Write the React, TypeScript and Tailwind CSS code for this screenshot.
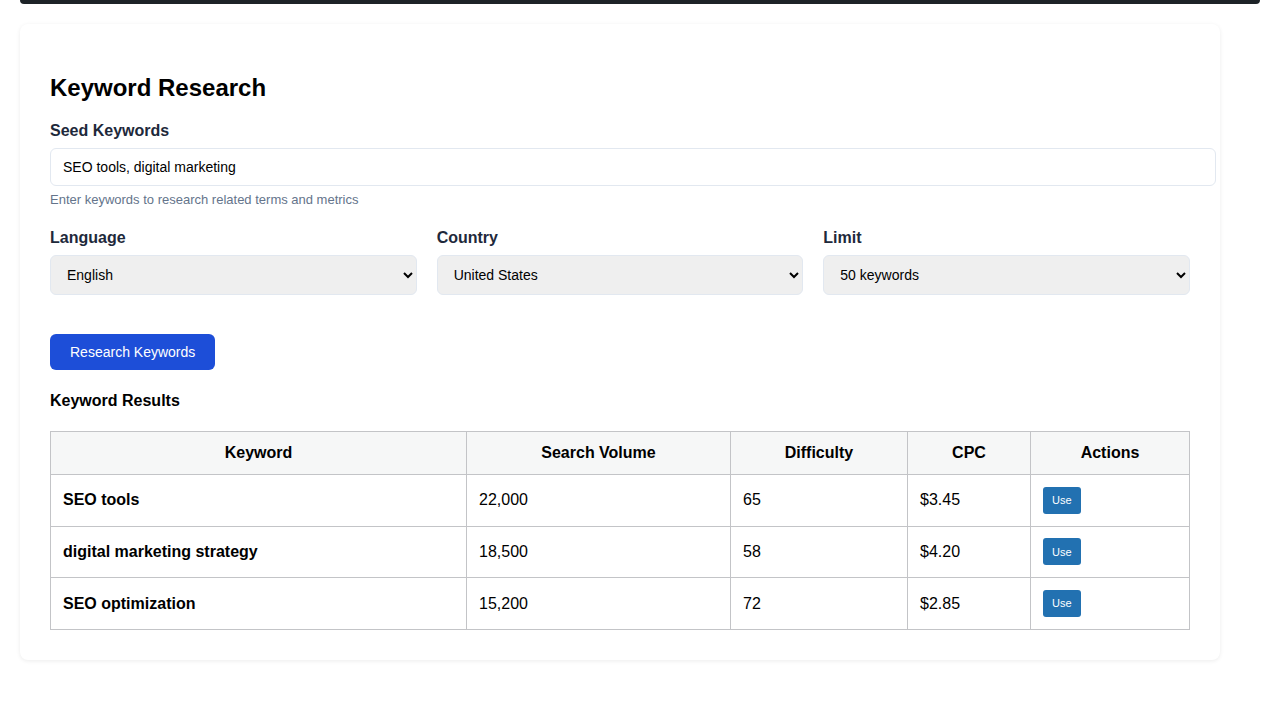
const rows = [
  { keyword: "SEO tools", volume: "22,000", difficulty: 65, cpc: "$3.45" },
  { keyword: "digital marketing strategy", volume: "18,500", difficulty: 58, cpc: "$4.20" },
  { keyword: "SEO optimization", volume: "15,200", difficulty: 72, cpc: "$2.85" },
];

export default function App() {
  return (
    <div className="min-h-screen bg-white font-['Liberation_Sans',Arial,sans-serif] text-black">
      {/* top bar */}
      <div className="mx-5 h-1 rounded-b bg-[#1d2327]" />

      <div className="mx-5 mt-5 w-[1200px] rounded-lg bg-white p-[30px] shadow-[0_1px_4px_rgba(0,0,0,0.08)]">
        <h2 className="mt-5 text-2xl leading-7 font-bold">Keyword Research</h2>

        {/* seed */}
        <div className="mt-[20px]">
          <label className="block text-base leading-[18px] font-bold text-[#1e293b]">Seed Keywords</label>
          <input
            className="mt-[8px] box-content block h-[18px] w-full rounded-md border border-[#e2e8f0] bg-white px-3 py-[9px] text-sm text-black outline-none"
            defaultValue="SEO tools, digital marketing"
          />
          <p className="mt-[6px] text-[13px] leading-[15px] text-[#64748b]">
            Enter keywords to research related terms and metrics
          </p>
        </div>

        {/* selects */}
        <div className="mt-[22px] grid grid-cols-3 gap-5">
          <div>
            <label className="block text-base leading-[18px] font-bold text-[#1e293b]">Language</label>
            <select className="mt-[8px] h-10 w-full rounded-md border border-[#e2e8f0] bg-[#efefef] px-[12px] text-sm text-black">
              <option>English</option>
            </select>
          </div>
          <div>
            <label className="block text-base leading-[18px] font-bold text-[#1e293b]">Country</label>
            <select className="mt-[8px] h-10 w-full rounded-md border border-[#e2e8f0] bg-[#efefef] px-[12px] text-sm text-black">
              <option>United States</option>
            </select>
          </div>
          <div>
            <label className="block text-base leading-[18px] font-bold text-[#1e293b]">Limit</label>
            <select className="mt-[8px] h-10 w-full rounded-md border border-[#e2e8f0] bg-[#efefef] px-[12px] text-sm text-black">
              <option>50 keywords</option>
            </select>
          </div>
        </div>

        <button className="mt-[39px] h-9 rounded-md bg-[#1d4ed8] px-5 text-sm text-white">
          Research Keywords
        </button>

        <h3 className="mt-[22px] text-base leading-[18px] font-bold">Keyword Results</h3>

        <table className="mt-[21px] w-full border-collapse border border-[#c3c4c7] text-base">
          <thead>
            <tr className="bg-[#f6f7f7]">
              <th className="w-[416px] border border-[#c3c4c7] px-3 py-3 leading-[18px] font-bold">Keyword</th>
              <th className="w-[264px] border border-[#c3c4c7] px-3 py-3 leading-[18px] font-bold">Search Volume</th>
              <th className="w-[177px] border border-[#c3c4c7] px-3 py-3 leading-[18px] font-bold">Difficulty</th>
              <th className="w-[123px] border border-[#c3c4c7] px-3 py-3 leading-[18px] font-bold">CPC</th>
              <th className="border border-[#c3c4c7] px-3 py-3 leading-[18px] font-bold">Actions</th>
            </tr>
          </thead>
          <tbody>
            {rows.map((r) => (
              <tr key={r.keyword}>
                <td className="h-[51.67px] border border-[#c3c4c7] px-3 leading-[18px] font-bold">{r.keyword}</td>
                <td className="border border-[#c3c4c7] px-3 leading-[18px]">{r.volume}</td>
                <td className="border border-[#c3c4c7] px-3 leading-[18px]">{r.difficulty}</td>
                <td className="border border-[#c3c4c7] px-3 leading-[18px]">{r.cpc}</td>
                <td className="border border-[#c3c4c7] px-3">
                  <button className="h-[27px] rounded-[3px] bg-[#2271b1] px-[9px] text-[11px] text-white">Use</button>
                </td>
              </tr>
            ))}
          </tbody>
        </table>
      </div>
    </div>
  );
}
